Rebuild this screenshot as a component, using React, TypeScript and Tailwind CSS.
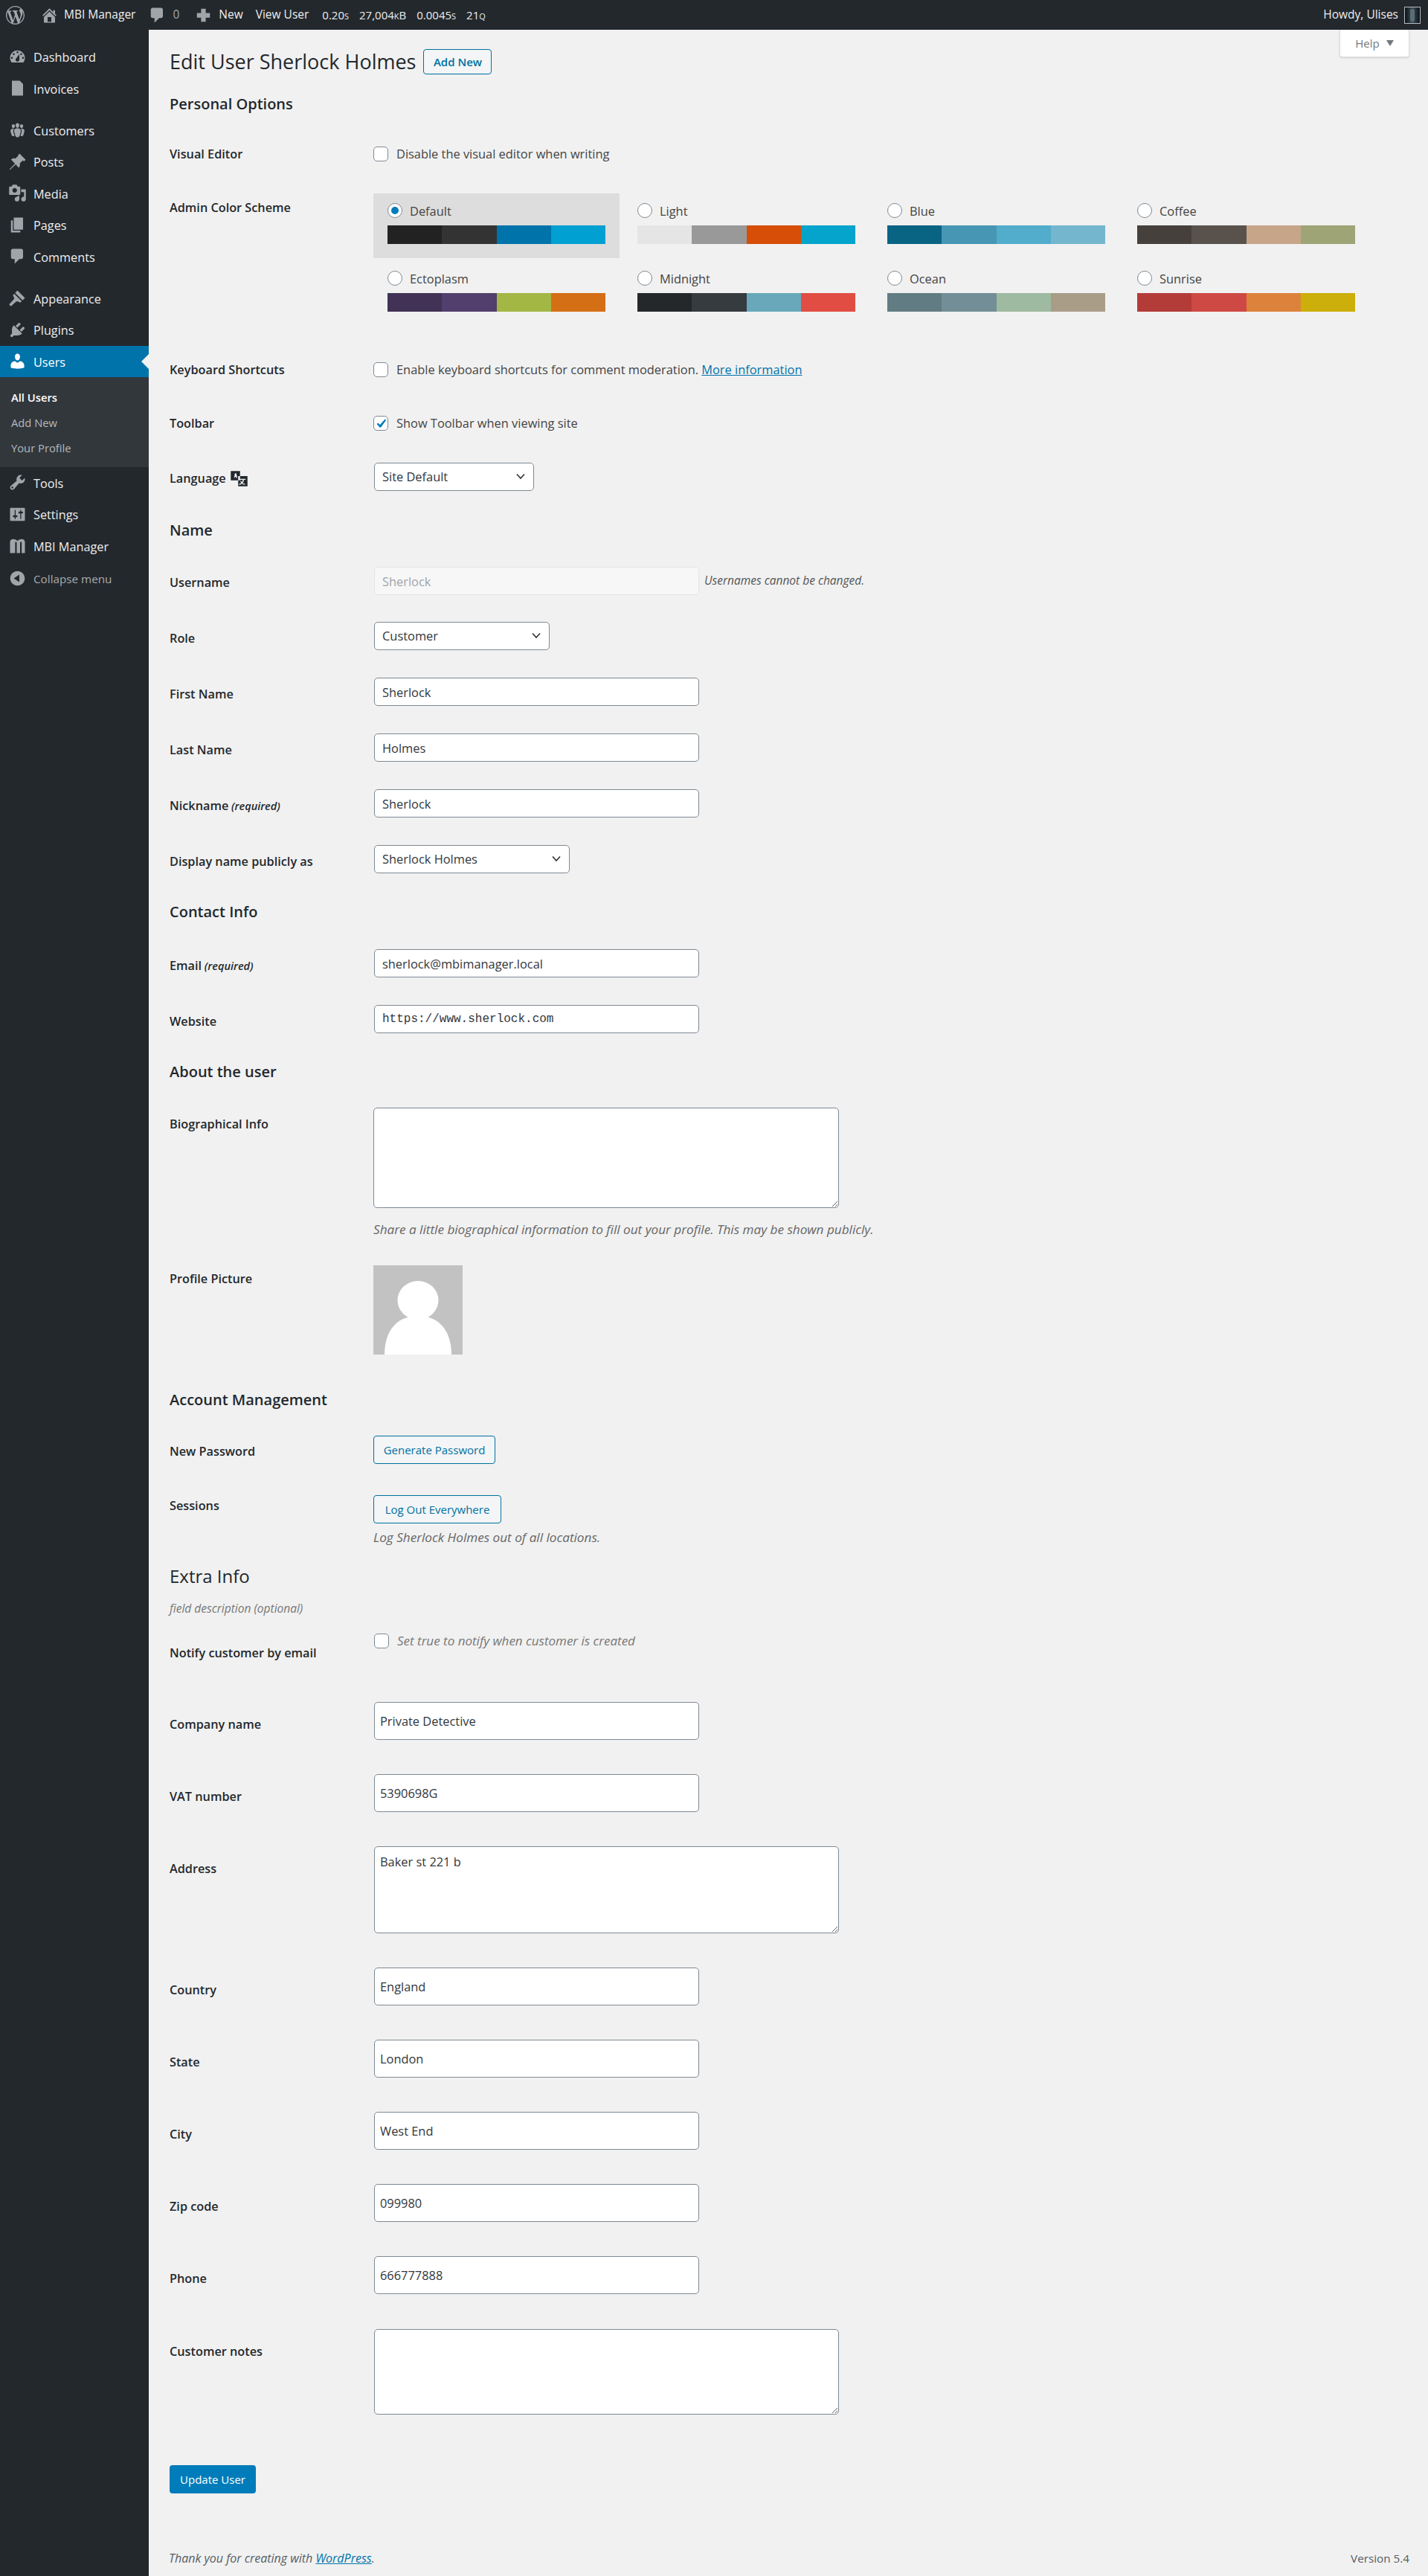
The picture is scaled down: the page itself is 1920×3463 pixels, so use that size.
import type { ReactNode } from "react";

const iconPaths: Record<string, string> = {
  dashboard:
    "M3.76 16h12.48c1.1-1.37 1.76-3.11 1.76-5 0-4.42-3.58-8-8-8s-8 3.58-8 8c0 1.89.66 3.63 1.76 5zM10 4c.55 0 1 .45 1 1s-.45 1-1 1-1-.45-1-1 .45-1 1-1zM6 6c.55 0 1 .45 1 1s-.45 1-1 1-1-.45-1-1 .45-1 1-1zm8 0c.55 0 1 .45 1 1s-.45 1-1 1-1-.45-1-1 .45-1 1-1zm-5.37 5.55L12 7v6c0 1.1-.9 2-2 2s-2-.9-2-2c0-.57.24-1.08.63-1.45zM4 10c.55 0 1 .45 1 1s-.45 1-1 1-1-.45-1-1 .45-1 1-1zm12 0c.55 0 1 .45 1 1s-.45 1-1 1-1-.45-1-1 .45-1 1-1z",
  invoices: "M4 2h8.500L16 5.500V18H4z",
  customers:
    "M8.03 4.46c-.29 1.28.55 3.46 1.97 3.46 1.41 0 2.25-2.18 1.96-3.46-.22-.98-1.08-1.63-1.96-1.63-.89 0-1.74.65-1.97 1.63zm-4.13.9c-.25 1.08.47 2.93 1.67 2.93s1.92-1.85 1.67-2.93c-.19-.83-.92-1.39-1.67-1.39s-1.48.56-1.67 1.39zm8.86 0c-.25 1.08.47 2.93 1.66 2.93 1.2 0 1.92-1.85 1.67-2.93-.19-.83-.92-1.39-1.67-1.39-.74 0-1.47.56-1.66 1.39zm-.59 11.43l1.25-4.3C14.2 10 12.71 8.47 10 8.47c-2.72 0-4.21 1.53-3.44 4.02l1.26 4.3C8.05 17.51 9 18 10 18c.98 0 1.94-.49 2.17-1.21zm-6.1-7.63c-.49.67-.96 1.83-.42 3.59l1.12 3.79c-.34.2-.77.31-1.2.31-.85 0-1.65-.41-1.85-1.03l-1.07-3.65c-.65-2.11.61-3.4 2.92-3.4.27 0 .54.02.79.06-.1.1-.2.22-.29.33zm8.35-.39c2.31 0 3.58 1.29 2.92 3.4l-1.07 3.65c-.2.62-1 1.03-1.85 1.03-.43 0-.86-.11-1.2-.31l1.11-3.77c.55-1.78.08-2.94-.42-3.61-.08-.11-.18-.23-.28-.33.25-.04.51-.06.79-.06z",
  posts:
    "M10.44 3.02l1.82-1.82 6.53 6.53-1.82 1.82-1.1-1.1-3.4 3.4c.5 1.6.1 3.4-1.1 4.6L8.100 12.700 2 18.500l-.500-.500L7.300 11.900 3.100 7.600c1.200-1.200 3-1.600 4.600-1.100l3.400-3.400z",
  media:
    "M13 11V4c0-.55-.45-1-1-1h-1.67L9 1H5L3.67 3H2c-.55 0-1 .45-1 1v7c0 .55.45 1 1 1h10c.55 0 1-.45 1-1zM7 4.500c1.380 0 2.500 1.120 2.500 2.500S8.380 9.500 7 9.500 4.500 8.380 4.500 7 5.620 4.500 7 4.500zM14 6h5v10.500c0 1.380-1.120 2.500-2.500 2.500S14 17.880 14 16.500s1.120-2.500 2.500-2.500c.17 0 .34.02.5.05V9h-3V6zm-4 8.050V13h2v3.500c0 1.380-1.120 2.500-2.500 2.500S7 17.880 7 16.500 8.120 14 9.500 14c.17 0 .34.02.5.05z",
  pages: "M6 15V2h10v13H6zm-1 1h8v2H3V5h2v11z",
  comments:
    "M5 2h9c1.100 0 2 .9 2 2v7c0 1.100-.9 2-2 2h-2l-5 5v-5H5c-1.100 0-2-.9-2-2V4c0-1.100.9-2 2-2z",
  appearance:
    "M10 2l8 8-2.500 2.500-8-8zM6.500 5.500l8 8-1.500 1.500-3-1.500-1.500.5L3 19 1 17l5-5.500.5-1.500L5 7z",
  plugins:
    "M13.110 4.360L9.870 7.600 8 5.730l3.240-3.240c.35-.34 1.050-.2 1.560.32.520.510.660 1.210.310 1.550zm-8 1.770l.910-1.120 9.010 9.010-1.190.84c-.710.710-2.630 1.160-3.820 1.160H6.140L4.900 17.260c-.59.59-1.540.59-2.120 0-.59-.58-.59-1.530 0-2.120l1.240-1.240v-3.880c0-1.130.4-3.190 1.090-3.890zm7.260 3.970l3.240-3.240c.34-.35 1.040-.21 1.550.31.520.51.66 1.210.31 1.550l-3.240 3.250z",
  users:
    "M10 9.250c-2.270 0-2.730-3.440-2.730-3.440C7 4.020 7.820 2 9.970 2c2.160 0 2.980 2.020 2.710 3.810 0 0-.41 3.440-2.680 3.440zm0 2.570L12.720 10c2.390 0 4.520 2.330 4.520 4.530v2.490s-3.650 1.130-7.240 1.130c-3.650 0-7.240-1.130-7.240-1.130v-2.490c0-2.250 1.940-4.480 4.470-4.480z",
  tools:
    "M16.680 9.770c-1.340 1.340-3.300 1.670-4.950.99l-5.410 6.520c-.99.99-2.590.99-3.570 0-.99-.980-.99-2.580 0-3.570l6.520-5.420c-.68-1.650-.35-3.610.99-4.950 1.280-1.280 3.120-1.620 4.720-1.060l-2.890 2.890 2.820 2.820 2.860-2.870c.53 1.580.18 3.390-1.090 4.670zM3.810 16.210c.4.39 1.040.39 1.430 0 .4-.4.4-1.040 0-1.440-.39-.39-1.030-.39-1.430 0-.39.4-.39 1.040 0 1.440z",
  settings:
    "M18 16V4c0-.55-.45-1-1-1H3c-.55 0-1 .45-1 1v12c0 .55.45 1 1 1h14c.55 0 1-.45 1-1zM8 11h1c.55 0 1 .45 1 1s-.45 1-1 1H8v1.500c0 .280-.22.500-.5.500s-.5-.22-.5-.5V13H6c-.55 0-1-.45-1-1s.45-1 1-1h1V5.500c0-.28.22-.5.5-.5s.5.22.5.5V11zm5-2h-1c-.55 0-1-.45-1-1s.45-1 1-1h1V5.500c0-.28.22-.5.5-.5s.5.22.5.5V7h1c.55 0 1 .45 1 1s-.45 1-1 1h-1v5.500c0 .280-.22.500-.5.500s-.5-.22-.5-.5V9z",
  mbi: "M2 18V6.500C2 4 3.800 3 5.500 3c1.500 0 3 .6 4.500 2 1.500-1.400 3-2 4.500-2C16.200 3 18 4 18 6.500V18h-3.500V7c0-.8-.4-1-.8-1-.5 0-.9.3-.9 1v11H9.200V7c0-.7-.4-1-.9-1-.4 0-.8.2-.8 1v11z",
  collapse:
    "M10 2.160c4.330 0 7.840 3.510 7.840 7.840s-3.510 7.840-7.840 7.840S2.160 14.330 2.160 10 5.670 2.160 10 2.160zm2 11.840V6l-6 4z",
  wp: "M20 10c0-5.510-4.490-10-10-10C4.480 0 0 4.490 0 10c0 5.520 4.480 10 10 10 5.510 0 10-4.480 10-10zM7.780 15.370L4.370 6.220c.55-.02 1.170-.08 1.170-.08.5-.06.44-1.130-.06-1.110 0 0-1.450.11-2.370.11-.18 0-.37 0-.58-.01C4.120 2.690 6.890 1.030 10 1.030c2.320 0 4.430.9 6.010 2.360-.68-.11-1.650.39-1.650 1.580 0 .74.45 1.360.9 2.100.35.610.55 1.360.55 2.460 0 1.490-1.400 5-1.400 5l-3.030-8.370c.54-.02.82-.17.82-.17.5-.05.44-1.250-.06-1.220 0 0-1.440.12-2.380.12-.87 0-2.330-.12-2.330-.12-.5-.03-.56 1.200-.06 1.220l.92.080 1.260 3.410zM17.410 10c.24-.64.740-1.870.43-4.250.7 1.290 1.050 2.710 1.050 4.250 0 3.290-1.730 6.240-4.400 7.780.97-2.590 1.940-5.200 2.920-7.780zM6.100 18.090C3.120 16.650 1.110 13.530 1.110 10c0-1.300.23-2.480.72-3.590C3.250 10.300 4.670 14.200 6.100 18.090zm4.030-6.630l2.580 6.980c-.86.29-1.760.45-2.710.45-.79 0-1.570-.11-2.290-.33.81-2.380 1.620-4.740 2.420-7.100z",
  home: "M16 8.500l1.530 1.530-1.060 1.060L10 4.620l-6.470 6.470-1.060-1.060L10 2.500l4 4v-2h2v4zm-6-2.460l6 5.990V18H4v-5.970zM12 17v-5H8v5h4z",
  plus: "M17 7.500v5h-4.500V17h-5v-4.500H3v-5h4.500V3h5v4.500z",
};

const Icon = ({ name, className }: { name: string; className: string }) => (
  <svg viewBox="0 0 20 20" className={className} fill="currentColor" fillRule="evenodd">
    <path d={iconPaths[name]} />
  </svg>
);

const MenuItem = ({ icon, label, active }: { icon: string; label: string; active?: boolean }) => (
  <div
    className={
      active
        ? "relative flex h-[42.5px] items-center bg-[#0073aa] text-white"
        : "flex h-[42.5px] items-center text-[#eeeeee]"
    }
  >
    <div className="flex w-[45px] justify-center pl-[1px]">
      <Icon
        name={icon}
        className={active ? "h-[25px] w-[25px] text-white" : "h-[25px] w-[25px] text-[#a0a5aa]"}
      />
    </div>
    <span className="pt-[2px]">{label}</span>
    {active && (
      <span className="absolute right-0 top-[11px] h-0 w-0 border-y-[10px] border-r-[10px] border-y-transparent border-r-[#f1f1f1]" />
    )}
  </div>
);

const Sidebar = () => (
  <aside className="w-[200px] shrink-0 bg-[#23282d] pt-[15px] text-[16.25px]">
    <MenuItem icon="dashboard" label="Dashboard" />
    <MenuItem icon="invoices" label="Invoices" />
    <div className="h-[13.5px]" />
    <MenuItem icon="customers" label="Customers" />
    <MenuItem icon="posts" label="Posts" />
    <MenuItem icon="media" label="Media" />
    <MenuItem icon="pages" label="Pages" />
    <MenuItem icon="comments" label="Comments" />
    <div className="h-[13.5px]" />
    <MenuItem icon="appearance" label="Appearance" />
    <MenuItem icon="plugins" label="Plugins" />
    <MenuItem icon="users" label="Users" active />
    <div className="flex h-[120.5px] flex-col gap-[10px] bg-[#32373c] pl-[15px] pt-[15px] text-[14.75px] leading-[24px] text-[#b4b9be]">
      <span className="font-semibold text-white">All Users</span>
      <span>Add New</span>
      <span>Your Profile</span>
    </div>
    <MenuItem icon="tools" label="Tools" />
    <MenuItem icon="settings" label="Settings" />
    <MenuItem icon="mbi" label="MBI Manager" />
    <div className="flex h-[44px] items-center text-[15.25px] text-[#aaaaaa]">
      <div className="flex w-[45px] justify-center pl-[1px]">
        <Icon name="collapse" className="h-[25px] w-[25px] text-[#a0a5aa]" />
      </div>
      <span className="pt-[2px]">Collapse menu</span>
    </div>
  </aside>
);

const TopBar = () => (
  <header className="flex h-[40px] items-center justify-between bg-[#23282d] pl-[8px] pr-[10px] text-[15.5px] text-[#eeeeee]">
    <div className="flex items-center">
      <Icon name="wp" className="h-[25px] w-[25px] text-[#a0a5aa]" />
      <Icon name="home" className="ml-[21px] h-[25px] w-[25px] text-[#a0a5aa]" />
      <span className="ml-[7px]">MBI Manager</span>
      <Icon name="comments" className="ml-[17px] h-[25px] w-[25px] text-[#a0a5aa]" />
      <span className="ml-[8px] text-[#a0a5aa]">0</span>
      <Icon name="plus" className="ml-[20px] h-[25px] w-[25px] text-[#a0a5aa]" />
      <span className="ml-[8px]">New</span>
      <span className="ml-[17px]">View User</span>
      <span className="ml-[18px] text-[15px] [font-variant:small-caps]">0.20s</span>
      <span className="ml-[14px] text-[15px] [font-variant:small-caps]">27,004kB</span>
      <span className="ml-[14px] text-[15px] [font-variant:small-caps]">0.0045s</span>
      <span className="ml-[14px] text-[15px] [font-variant:small-caps]">21q</span>
    </div>
    <div className="flex items-center gap-[8px]">
      <span>Howdy, Ulises</span>
      <div className="flex h-[23px] w-[22px] justify-center border border-[#b8bdc1] bg-gradient-to-r from-[#0a1319] via-[#41525c] to-[#0a1319]">
        <div className="mt-[2px] h-[17px] w-[6px] rounded-full bg-[#5c6d76]" />
      </div>
    </div>
  </header>
);

const Row = ({
  label,
  className,
  labelClass,
  children,
}: {
  label: ReactNode;
  className: string;
  labelClass: string;
  children: ReactNode;
}) => (
  <div className={`flex ${className}`}>
    <div className={`w-[274px] shrink-0 text-[16.25px] font-semibold leading-[24px] text-[#23282d] ${labelClass}`}>
      {label}
    </div>
    {children}
  </div>
);

const Heading = ({ className, children }: { className: string; children: ReactNode }) => (
  <h2 className={`text-[20px] font-semibold leading-[28px] text-[#23282d] ${className}`}>{children}</h2>
);

const Check = ({ checked, className }: { checked?: boolean; className?: string }) => (
  <span className={`relative inline-flex h-[20px] w-[20px] shrink-0 ${className ?? ""}`}>
    <input
      type="checkbox"
      readOnly
      checked={!!checked}
      className="h-[20px] w-[20px] appearance-none rounded-[5px] border border-[#7e8993] bg-white"
    />
    {checked && (
      <svg viewBox="0 0 20 20" className="absolute left-0 top-0 h-[20px] w-[20px] text-[#007cba]" fill="currentColor">
        <path d="M15.500 4.500l1.700 1.300-7 9.700h-1.700L4.600 11.100l1.600-1.600 2.800 2.600z" />
      </svg>
    )}
  </span>
);

const schemes = [
  { name: "Default", colors: ["#222222", "#333333", "#0073aa", "#00a0d2"], selected: true },
  { name: "Light", colors: ["#e5e5e5", "#999999", "#d64e07", "#04a4cc"] },
  { name: "Blue", colors: ["#096484", "#4796b3", "#52accc", "#74b6ce"] },
  { name: "Coffee", colors: ["#46403c", "#59524c", "#c7a589", "#9ea476"] },
  { name: "Ectoplasm", colors: ["#413256", "#523f6d", "#a3b745", "#d46f15"] },
  { name: "Midnight", colors: ["#25282b", "#363b3f", "#69a8bb", "#e14d43"] },
  { name: "Ocean", colors: ["#627c83", "#738e96", "#9ebaa0", "#aa9d88"] },
  { name: "Sunrise", colors: ["#b43c38", "#cf4944", "#dd823b", "#ccaf0b"] },
];

const Scheme = ({ name, colors, selected }: { name: string; colors: string[]; selected?: boolean }) => (
  <div className={selected ? "h-[87px] rounded-none bg-[#dddddd] px-[19px] pt-[13px]" : "h-[87px] px-[19px] pt-[13px]"}>
    <div className="flex h-[20px] items-center">
      <span className="relative inline-flex h-[20px] w-[20px] shrink-0 items-center justify-center">
        <input
          type="radio"
          readOnly
          checked={!!selected}
          className="h-[20px] w-[20px] appearance-none rounded-full border border-[#7e8993] bg-white"
        />
        {selected && <span className="absolute h-[10px] w-[10px] rounded-full bg-[#007cba]" />}
      </span>
      <span className="ml-[10px] pt-[2px]">{name}</span>
    </div>
    <div className="mt-[10px] flex h-[25px]">
      {colors.map((c) => (
        <div key={c} className="flex-1" style={{ backgroundColor: c }} />
      ))}
    </div>
  </div>
);

const inputClass =
  "h-[38px] w-[437px] rounded-[5px] border border-[#7e8993] bg-white px-[10px] text-[#32373c] outline-none";
const extraInputClass =
  "ml-[1px] h-[51px] w-[437px] rounded-[5px] border border-[#7e8993] bg-white px-[7px] text-[#32373c] outline-none";

const Select = ({ value, className }: { value: string; className: string }) => (
  <div className={`relative h-[38px] ${className}`}>
    <select
      defaultValue={value}
      className="h-[38px] w-full appearance-none rounded-[5px] border border-[#7e8993] bg-white pl-[10px] text-[#32373c] outline-none"
    >
      <option>{value}</option>
    </select>
    <svg
      viewBox="0 0 20 20"
      className="pointer-events-none absolute right-[8px] top-[8px] h-[20px] w-[20px] text-[#32373c]"
      fill="none"
      stroke="currentColor"
      strokeWidth="1.700"
    >
      <path d="M5 7.500l5 5.500 5-5.500" />
    </svg>
  </div>
);

const Required = () => <em className="text-[14.5px] font-semibold"> (required)</em>;

const ExtraRow = ({ label, value }: { label: string; value: string }) => (
  <Row label={label} className="mt-[46px]" labelClass="pt-[18px]">
    <input readOnly defaultValue={value} className={extraInputClass} />
  </Row>
);

const SecondaryButton = ({ className, children }: { className: string; children: ReactNode }) => (
  <button className={`h-[38px] rounded-[4px] border border-[#0071a1] bg-[#f3f5f6] text-[15px] text-[#0071a1] ${className}`}>
    {children}
  </button>
);

const UserForm = () => (
  <form className="relative flex-1 pl-[28px] text-[16.4px] text-[#444444]">
    <div className="absolute right-[25px] top-0 flex h-[37px] w-[94px] items-center justify-center gap-[9px] rounded-b-[4px] border border-t-0 border-[#dddddd] bg-white text-[15px] text-[#72777c] shadow-sm">
      Help
      <span className="h-0 w-0 border-x-[5px] border-t-[8px] border-x-transparent border-t-[#72777c]" />
    </div>

    <div className="mt-[26px] flex h-[34px] items-center">
      <h1 className="text-[27px] font-normal text-[#23282d]">Edit User Sherlock Holmes</h1>
      <a className="ml-[10px] flex h-[34px] w-[92px] items-center justify-center rounded-[4px] border border-[#0071a1] bg-[#f3f5f6] text-[15px] font-semibold text-[#0071a1]">
        Add New
      </a>
    </div>

    <Heading className="mt-[26px]">Personal Options</Heading>
    <Row label="Visual Editor" className="mt-[43px] h-[20px] items-center" labelClass="">
      <Check />
      <span className="ml-[11px]">Disable the visual editor when writing</span>
    </Row>
    <Row label="Admin Color Scheme" className="mt-[43px]" labelClass="pt-[7px]">
      <div className="grid w-[1339px] grid-cols-4 gap-x-[5px] gap-y-[4px]">
        {schemes.map((s) => (
          <Scheme key={s.name} {...s} />
        ))}
      </div>
    </Row>
    <Row label="Keyboard Shortcuts" className="mt-[49px] h-[20px] items-center" labelClass="">
      <Check />
      <span className="ml-[11px]">
        Enable keyboard shortcuts for comment moderation.{" "}
        <a className="text-[#0073aa] underline">More information</a>
      </span>
    </Row>
    <Row label="Toolbar" className="mt-[52px] h-[20px] items-center" labelClass="">
      <Check checked />
      <span className="ml-[11px]">Show Toolbar when viewing site</span>
    </Row>
    <Row
      label={
        <span className="flex items-center gap-[5px]">
          Language
          <svg viewBox="0 0 20 20" className="h-[25px] w-[25px] text-[#23282d]" fill="currentColor">
            <path d="M1 2.500h10v10H1zM4.500 10l1-5h1.500l1 5H6.800l-.2-1.200H5.500L5.200 10zM9 8h10v11H9zM11 11h6v1h-2v.8c0 1-.6 2-1.200 2.700.7.400 1.500.7 2.700.8l-.3 1c-1.300-.2-2.300-.6-3.100-1.200-.8.6-1.800 1-3 1.200l-.3-1c1-.2 1.900-.5 2.500-1-.5-.6-.9-1.300-1.100-2.100h1c.2.600.5 1 .8 1.400.4-.5.7-1.100.7-1.700V12H11z" fillRule="evenodd" />
          </svg>
        </span>
      }
      className="mt-[43px]"
      labelClass="pt-[8px]"
    >
      <Select value="Site Default" className="ml-[1px] w-[215px]" />
    </Row>

    <Heading className="mt-[39px]">Name</Heading>
    <Row label="Username" className="mt-[35px]" labelClass="pt-[9px]">
      <input
        readOnly
        defaultValue="Sherlock"
        className="ml-[1px] h-[38px] w-[437px] rounded-[5px] border border-[#e4e4e4] bg-[#f7f7f7] px-[10px] text-[#a0a5aa] outline-none"
      />
      <em className="ml-[7px] self-center text-[15.5px] text-[#555555]">Usernames cannot be changed.</em>
    </Row>
    <Row label="Role" className="mt-[36px]" labelClass="pt-[10px]">
      <Select value="Customer" className="ml-[1px] w-[236px]" />
    </Row>
    <Row label="First Name" className="mt-[37px]" labelClass="pt-[10px]">
      <input readOnly defaultValue="Sherlock" className={`ml-[1px] ${inputClass}`} />
    </Row>
    <Row label="Last Name" className="mt-[37px]" labelClass="pt-[10px]">
      <input readOnly defaultValue="Holmes" className={`ml-[1px] ${inputClass}`} />
    </Row>
    <Row label={<>Nickname<Required /></>} className="mt-[37px]" labelClass="pt-[10px]">
      <input readOnly defaultValue="Sherlock" className={`ml-[1px] ${inputClass}`} />
    </Row>
    <Row label="Display name publicly as" className="mt-[37px]" labelClass="pt-[10px]">
      <Select value="Sherlock Holmes" className="ml-[1px] w-[263px]" />
    </Row>

    <Heading className="mt-[38px]">Contact Info</Heading>
    <Row label={<>Email<Required /></>} className="mt-[36px]" labelClass="pt-[10px]">
      <input readOnly defaultValue="sherlock@mbimanager.local" className={`ml-[1px] ${inputClass}`} />
    </Row>
    <Row label="Website" className="mt-[37px]" labelClass="pt-[10px]">
      <input
        readOnly
        defaultValue="https://www.sherlock.com"
        className={`ml-[1px] font-['Liberation_Mono',monospace] text-[16px] ${inputClass}`}
      />
    </Row>

    <Heading className="mt-[38px]">About the user</Heading>
    <Row label="Biographical Info" className="mt-[34px]" labelClass="pt-[10px]">
      <textarea readOnly className="h-[135px] w-[626px] rounded-[5px] border border-[#7e8993] bg-white outline-none" />
    </Row>
    <p className="ml-[274px] mt-[17px] text-[17.15px] leading-[24px] text-[#666666]">
      <em>Share a little biographical information to fill out your profile. This may be shown publicly.</em>
    </p>
    <Row label="Profile Picture" className="mt-[36px]" labelClass="pt-[6px]">
      <svg viewBox="0 0 120 120" className="h-[120px] w-[120px] bg-[#c2c2c2]" fill="#ffffff">
        <ellipse cx="60" cy="47" rx="27.500" ry="26" />
        <path d="M15 120c0-30 15-52 45-52s45 22 45 52z" />
      </svg>
    </Row>

    <Heading className="mt-[47px]">Account Management</Heading>
    <Row label="New Password" className="mt-[34px]" labelClass="pt-[9px]">
      <SecondaryButton className="w-[164px]">Generate Password</SecondaryButton>
    </Row>
    <Row label="Sessions" className="mt-[42px]" labelClass="pt-[2px]">
      <div>
        <SecondaryButton className="w-[172px]">Log Out Everywhere</SecondaryButton>
        <p className="mt-[7px] text-[17.15px] leading-[24px] text-[#666666]">
          <em>Log Sherlock Holmes out of all locations.</em>
        </p>
      </div>
    </Row>

    <h2 className="mt-[22px] text-[24px] font-medium leading-[36px] text-[#23282d]">Extra Info</h2>
    <p className="mt-[15px] text-[15.5px] leading-[20px] text-[#777777]">
      <em>field description (optional)</em>
    </p>
    <Row label="Notify customer by email" className="mt-[24px]" labelClass="pt-[14px]">
      <Check className="ml-[1px]" />
      <em className="ml-[11px] text-[17px] leading-[20px] text-[#777777]">Set true to notify when customer is created</em>
    </Row>
    <div className="h-[8px]" />
    <ExtraRow label="Company name" value="Private Detective" />
    <ExtraRow label="VAT number" value="5390698G" />
    <Row label="Address" className="mt-[46px]" labelClass="pt-[18px]">
      <textarea
        readOnly
        defaultValue="Baker st 221 b"
        className="ml-[1px] h-[117px] w-[625px] rounded-[5px] border border-[#7e8993] bg-white px-[7px] pt-[8px] text-[#32373c] outline-none"
      />
    </Row>
    <ExtraRow label="Country" value="England" />
    <ExtraRow label="State" value="London" />
    <ExtraRow label="City" value="West End" />
    <ExtraRow label="Zip code" value="099980" />
    <ExtraRow label="Phone" value="666777888" />
    <Row label="Customer notes" className="mt-[47px]" labelClass="pt-[18px]">
      <textarea readOnly className="ml-[1px] h-[115px] w-[625px] rounded-[5px] border border-[#7e8993] bg-white outline-none" />
    </Row>

    <button className="mt-[68px] block h-[38px] w-[116px] rounded-[4px] bg-[#007cba] text-[15px] text-white">
      Update User
    </button>

    <footer className="-ml-[1px] mt-[77px] flex justify-between pr-[25px] text-[16px] leading-[20px] text-[#555d66]">
      <em>
        Thank you for creating with <a className="text-[#0073aa] underline">WordPress</a>.
      </em>
      <span className="text-[15.25px]">Version 5.4</span>
    </footer>
  </form>
);

export default function App() {
  return (
    <div className="flex h-[3463px] flex-col overflow-hidden bg-[#f1f1f1] font-['Open_Sans',sans-serif]">
      <TopBar />
      <div className="flex flex-1">
        <Sidebar />
        <UserForm />
      </div>
    </div>
  );
}
